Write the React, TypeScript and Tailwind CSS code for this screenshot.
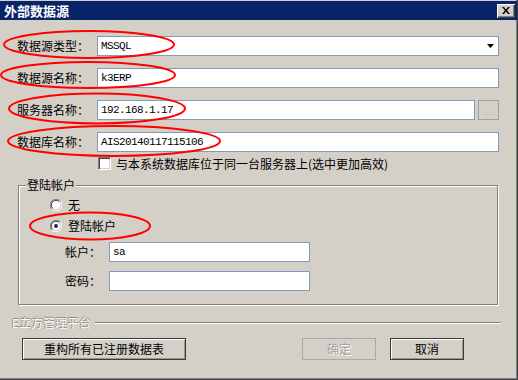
import React from "react";

const cjk = "font-['Noto_Sans_CJK_SC','Noto_Sans_CJK_JP',sans-serif]";
const mono = "font-['Liberation_Mono','DejaVu_Sans_Mono',monospace]";

function Input({ value, className = "" }: { value?: string; className?: string }) {
  return (
    <div
      className={`h-[20px] bg-white border border-[#7f9db9] flex items-center pl-[3px] text-[11px] tracking-[-0.6px] text-black ${mono} ${className}`}
    >
      {value}
    </div>
  );
}

function Label({ text }: { text: string }) {
  return <span className={`w-[80px] shrink-0 text-[12px] leading-[12px] text-black ${cjk}`}>{text}</span>;
}

function Radio({ checked }: { checked?: boolean }) {
  return (
    <span className="relative w-[12px] h-[12px] shrink-0">
      <svg width="12" height="12" viewBox="0 0 12 12" className="block">
        <path d="M10.24 1.76 A6 6 0 0 0 1.76 10.24" fill="none" stroke="#808080" strokeWidth="1" />
        <path d="M1.76 10.24 A6 6 0 0 0 10.24 1.76" fill="none" stroke="#ffffff" strokeWidth="1" />
        <circle cx="6" cy="6" r="4.6" fill="#ffffff" />
        <path d="M9.3 2.7 A4.6 4.6 0 0 0 2.7 9.3" fill="none" stroke="#404040" strokeWidth="1" />
        <path d="M2.7 9.3 A4.6 4.6 0 0 0 9.3 2.7" fill="none" stroke="#d4d0c8" strokeWidth="1" />
        {checked && <circle cx="6" cy="6" r="2" fill="#1c2656" />}
      </svg>
    </span>
  );
}

function Btn({ text, w, disabled }: { text: string; w: string; disabled?: boolean }) {
  return (
    <div
      className={`${w} h-[22px] flex items-center justify-center text-[12px] ${cjk} ${
        disabled
          ? "border border-[#a8a8a8] text-[#a0a0a0] [text-shadow:1px_1px_0_#ffffff]"
          : "border border-[#3a3a3a] text-black shadow-[inset_1px_1px_0_#ffffff,inset_-1px_-1px_0_#9a9690]"
      }`}
    >
      {text}
    </div>
  );
}

export default function App() {
  return (
    <div className="relative w-[518px] h-[380px] bg-[#d4d0c8] shadow-[inset_-1px_-1px_0_#404040,inset_-2px_-2px_0_#808080] overflow-hidden">
      {/* title bar */}
      <div className="mt-px h-[19px] w-[517px] bg-[#0a246a] flex items-center justify-between pl-[4px] pr-[2px]">
        <span className={`text-white font-bold text-[13px] leading-[13px] ${cjk}`}>外部数据源</span>
        <div className="w-[18px] h-[14px] bg-[#d4d0c8] shadow-[inset_1px_1px_0_#ffffff,inset_-1px_-1px_0_#404040,inset_-2px_-2px_0_#808080] flex items-center justify-center">
          <svg width="8" height="7" viewBox="0 0 8 7">
            <path d="M0 0h2l2 2.5L6 0h2L5 3.5 8 7H6L4 4.5 2 7H0l3-3.5z" fill="#000" />
          </svg>
        </div>
      </div>

      {/* body */}
      <div className="pl-[17px] pr-[19px] pt-[16px] flex flex-col">
        <div className="flex items-center h-[20px]">
          <Label text="数据源类型：" />
          <div className="relative w-[402px]">
            <Input value="MSSQL" className="w-[402px]" />
            <svg className="absolute right-[5px] top-[8px]" width="7" height="4" viewBox="0 0 7 4">
              <path d="M0 0h7L3.5 4z" fill="#000" />
            </svg>
          </div>
        </div>
        <div className="flex items-center h-[20px] mt-[12px]">
          <Label text="数据源名称：" />
          <Input value="k3ERP" className="w-[402px]" />
        </div>
        <div className="flex items-center h-[20px] mt-[12px]">
          <Label text="服务器名称：" />
          <Input value="192.168.1.17" className="w-[378px]" />
          <div className="ml-[3px] w-[21px] h-[20px] border border-[#a0a0a0] flex items-end justify-center pb-[4px] gap-[3px]">
            <span className="w-px h-px bg-[#a0a0a0]" />
            <span className="w-px h-px bg-[#a0a0a0]" />
          </div>
        </div>
        <div className="flex items-center h-[20px] mt-[12px]">
          <Label text="数据库名称：" />
          <Input value="AIS20140117115106" className="w-[402px]" />
        </div>

        {/* checkbox */}
        <div className="flex items-center h-[13px] mt-[5px] pl-[81px]">
          <span className="w-[13px] h-[13px] bg-white border border-t-[#808080] border-l-[#808080] border-r-[#ffffff] border-b-[#ffffff] shadow-[inset_1px_1px_0_#404040,inset_-1px_-1px_0_#d4d0c8]" />
          <span className={`ml-[5px] text-[12px] leading-[12px] text-black ${cjk}`}>
            与本系统数据库位于同一台服务器上(选中更加高效)
          </span>
        </div>

        {/* group box */}
        <div className="relative ml-px mt-[15px] w-[480px] h-[120px] border border-[#808080] shadow-[1px_1px_0_#ffffff,inset_1px_1px_0_#ffffff] flex flex-col pt-[11px]">
          <span className={`absolute left-[7px] top-[-7px] px-px bg-[#d4d0c8] text-[12px] leading-[12px] text-black ${cjk}`}>
            登陆帐户
          </span>
          <div className="flex items-center h-[16px] pl-[31px]">
            <Radio />
            <span className={`ml-[6px] text-[12px] leading-[12px] text-black ${cjk}`}>无</span>
          </div>
          <div className="flex items-center h-[16px] pl-[31px] mt-[5px]">
            <Radio checked />
            <span className={`ml-[6px] text-[12px] leading-[12px] text-black ${cjk}`}>登陆帐户</span>
          </div>
          <div className="flex items-center h-[20px] mt-[8px]">
            <span className={`w-[90px] text-right pr-[8px] text-[12px] leading-[12px] text-black ${cjk}`}>帐户：</span>
            <Input value="sa" className="w-[201px]" />
          </div>
          <div className="flex items-center h-[20px] mt-[9px]">
            <span className={`w-[90px] text-right pr-[8px] text-[12px] leading-[12px] text-black ${cjk}`}>密码：</span>
            <Input className="w-[201px]" />
          </div>
        </div>

        {/* separator */}
        <div className="flex items-center h-[14px] mt-[11px] -ml-[5px] -mr-[2px]">
          <span className={`text-[12px] leading-[12px] text-[#ffffff] [text-shadow:-1px_0_0_#8c8983,0_-1px_0_#8c8983] ${cjk}`}>
            E立方管理平台
          </span>
          <div className="flex-1 ml-[4px] h-[2px] border-t border-t-[#808080] border-b border-b-[#ffffff]" />
        </div>

        {/* buttons */}
        <div className="flex items-center mt-[8px] pl-[5px]">
          <Btn text="重构所有已注册数据表" w="w-[164px]" />
          <div className="flex-1" />
          <Btn text="确定" w="w-[74px]" disabled />
          <div className="w-[14px]" />
          <Btn text="取消" w="w-[74px]" />
          <div className="w-[35px]" />
        </div>
      </div>

      {/* red annotation ellipses */}
      <svg className="absolute inset-0 pointer-events-none" width="518" height="380" viewBox="0 0 518 380">
        <g fill="none" stroke="#ff0000" strokeWidth="2">
          <ellipse cx="89" cy="44.5" rx="85" ry="13.5" />
          <ellipse cx="88" cy="75" rx="87" ry="13" />
          <ellipse cx="97" cy="108.5" rx="88" ry="15" />
          <ellipse cx="114" cy="141" rx="106" ry="15" />
          <ellipse cx="90" cy="226" rx="60" ry="13.5" />
        </g>
      </svg>
    </div>
  );
}
